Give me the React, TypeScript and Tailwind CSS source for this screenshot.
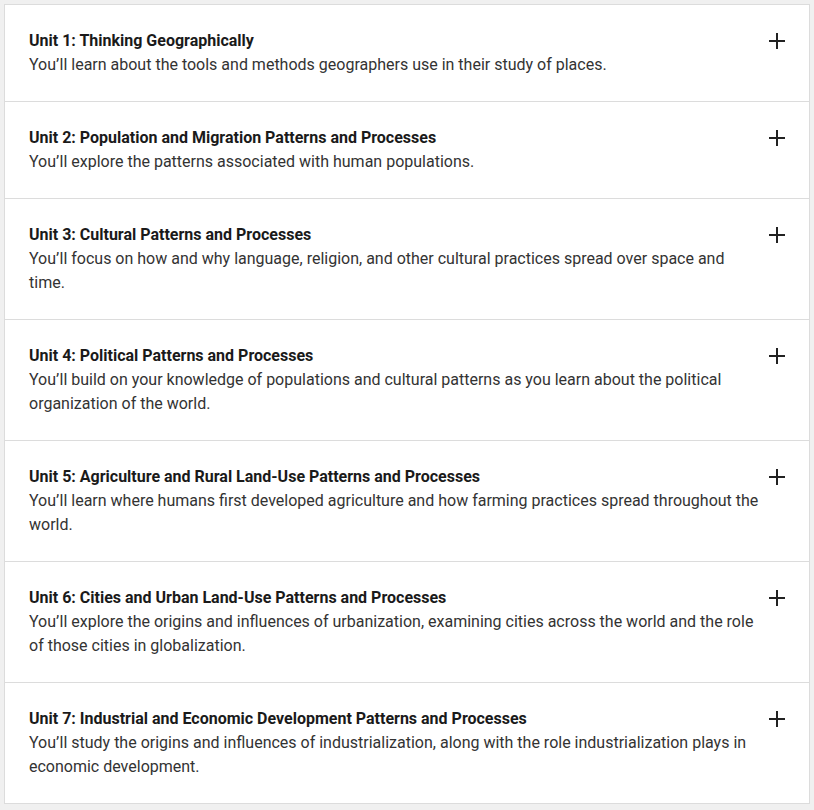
import React from 'react';

interface Unit {
  title: string;
  summary: string;
}

const units: Unit[] = [
  {
    title: 'Unit 1: Thinking Geographically',
    summary: 'You’ll learn about the tools and methods geographers use in their study of places.',
  },
  {
    title: 'Unit 2: Population and Migration Patterns and Processes',
    summary: 'You’ll explore the patterns associated with human populations.',
  },
  {
    title: 'Unit 3: Cultural Patterns and Processes',
    summary: 'You’ll focus on how and why language, religion, and other cultural practices spread over space and time.',
  },
  {
    title: 'Unit 4: Political Patterns and Processes',
    summary: 'You’ll build on your knowledge of populations and cultural patterns as you learn about the political organization of the world.',
  },
  {
    title: 'Unit 5: Agriculture and Rural Land-Use Patterns and Processes',
    summary: 'You’ll learn where humans first developed agriculture and how farming practices spread throughout the world.',
  },
  {
    title: 'Unit 6: Cities and Urban Land-Use Patterns and Processes',
    summary: 'You’ll explore the origins and influences of urbanization, examining cities across the world and the role of those cities in globalization.',
  },
  {
    title: 'Unit 7: Industrial and Economic Development Patterns and Processes',
    summary: 'You’ll study the origins and influences of industrialization, along with the role industrialization plays in economic development.',
  },
];

function PlusIcon() {
  return (
    <svg width="16" height="16" viewBox="0 0 16 16" className="shrink-0 mt-[4px] text-[#222]">
      <path d="M8 0v16M0 8h16" stroke="currentColor" strokeWidth="2" />
    </svg>
  );
}

export default function App() {
  return (
    <div className="min-h-[810px] bg-[#f0f0f0] p-[4px] font-['Roboto',sans-serif]">
      <div className="bg-white border border-[#dcdcdc]">
        {units.map((unit, i) => (
          <button
            key={unit.title}
            className={`w-full flex items-start gap-2 px-6 py-6 text-left ${i > 0 ? 'border-t border-[#dcdcdc]' : ''}`}
          >
            <div className="flex-1">
              <h3 className="text-base leading-6 font-bold text-[#1a1a1a]">{unit.title}</h3>
              <p className="text-base leading-6 text-[#333]">{unit.summary}</p>
            </div>
            <PlusIcon />
          </button>
        ))}
      </div>
    </div>
  );
}
